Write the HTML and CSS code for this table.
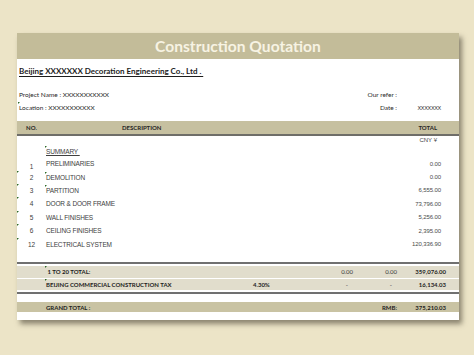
FILE: index.html
```html
<!DOCTYPE html>
<html>
<head>
<meta charset="utf-8">
<link rel="stylesheet" href="styles.css">
</head>
<body>
<div class="card">
  <div class="title">Construction Quotation</div>
  <div class="company"><span>Beijing XXXXXXX Decoration Engineering Co., Ltd .&nbsp;</span></div>
  <div class="info">
    <div class="info-row">
      <span class="info-left">Project Name : XXXXXXXXXXX</span>
      <span class="info-label">Our refer :</span>
      <span class="info-val"></span>
    </div>
    <div class="info-row">
      <span class="info-left mark mark-loc">Location : XXXXXXXXXXX</span>
      <span class="info-label">Date :</span>
      <span class="info-val">XXXXXXX</span>
    </div>
  </div>
  <div class="head">
    <span class="h-no">NO.</span>
    <span class="h-desc">DESCRIPTION</span>
    <span class="h-total">TOTAL</span>
  </div>
  <div class="items">
    <div class="cny">CNY ¥</div>
    <div class="item summary"><span class="no"></span><span class="desc mark"><u>SUMMARY&nbsp;</u></span><span class="amt"></span></div>
    <div class="item first"><span class="no">1</span><span class="desc">PRELIMINARIES</span><span class="amt">0.00</span></div>
    <div class="item"><span class="no mark mark-edge">2</span><span class="desc mark">DEMOLITION</span><span class="amt">0.00</span></div>
    <div class="item"><span class="no mark mark-edge">3</span><span class="desc mark">PARTITION</span><span class="amt">6,555.00</span></div>
    <div class="item"><span class="no mark mark-edge">4</span><span class="desc">DOOR &amp; DOOR FRAME</span><span class="amt">73,796.00</span></div>
    <div class="item"><span class="no mark mark-edge">5</span><span class="desc">WALL FINISHES</span><span class="amt">5,256.00</span></div>
    <div class="item"><span class="no mark mark-edge">6</span><span class="desc">CEILING FINISHES</span><span class="amt">2,395.00</span></div>
    <div class="item"><span class="no mark mark-edge">12</span><span class="desc">ELECTRICAL SYSTEM</span><span class="amt">120,336.90</span></div>
  </div>
  <div class="totals">
    <div class="trow">
      <span></span><span class="tl mark">&nbsp;1 TO 20 TOTAL:</span><span></span><span class="tn">0.00</span><span class="tn">0.00</span><span class="tt">359,076.00</span>
    </div>
    <div class="trow">
      <span></span><span class="tl mark">BEIJING COMMERCIAL CONSTRUCTION TAX</span><span class="tp">4.30%</span><span class="tn dash">-</span><span class="tn dash">-</span><span class="tt">16,134.03</span>
    </div>
  </div>
  <div class="grand">
    <span></span><span class="tl">GRAND TOTAL :</span><span></span><span></span><span class="tn">RMB:</span><span class="tt">375,210.03</span>
  </div>
</div>
</body>
</html>
```
FILE: styles.css
```css
html, body {
  margin: 0;
  padding: 0;
}
body {
  width: 474px;
  height: 355px;
  background: #ece4c7;
  overflow: hidden;
  font-family: "Liberation Sans", Arial, sans-serif;
  color: #3a3a3a;
}
.card {
  margin: 33px 0 0 17px;
  width: 442px;
  height: 287px;
  background: #fff;
  box-shadow: 3px 4px 5px rgba(60, 55, 40, 0.55);
  display: flex;
  flex-direction: column;
}
.title {
  height: 26px;
  background: #c3bc99;
  color: #f7f3e3;
  font-family: Lato, sans-serif;
  font-weight: bold;
  font-size: 15.6px;
  line-height: 26px;
  text-align: center;
}
.company {
  padding: 7px 0 0 2px;
  height: 14px;
  font-family: Lato, sans-serif;
  font-weight: bold;
  font-size: 8px;
  line-height: 10px;
  color: #1d1d1d;
}
.company span {
  text-decoration: underline;
  text-decoration-thickness: 1px;
  text-underline-offset: 2px;
}
.info {
  padding-top: 10px;
  display: flex;
  flex-direction: column;
  gap: 3px;
  font-family: Lato, sans-serif;
  font-size: 6.5px;
  color: #2a2a2a;
}
.info-row {
  display: grid;
  grid-template-columns: 1fr 37px 62px;
  height: 10px;
  line-height: 10px;
  padding-left: 2px;
}
.info-label {
  text-align: right;
}
.info-val {
  text-align: right;
  padding-right: 18px;
  font-family: "Liberation Sans", sans-serif;
  font-size: 5.5px;
  letter-spacing: -0.3px;
}
.head {
  margin-top: 8px;
  height: 13px;
  background: #c6c0a0;
  border-bottom: 2px solid #6e6d68;
  display: grid;
  grid-template-columns: 29px 1fr auto;
  align-items: center;
  font-family: Lato, sans-serif;
  font-weight: bold;
  font-size: 6px;
  color: #262626;
}
.h-no { text-align: center; }
.h-desc { padding-left: 76px; }
.h-total { padding-right: 22px; }
.items {
  display: flex;
  flex-direction: column;
  height: 126px;
}
.cny {
  align-self: flex-end;
  margin-right: 22px;
  font-size: 6px;
  line-height: 8px;
  color: #444;
}
.item {
  display: grid;
  grid-template-columns: 29px 1fr auto;
  align-items: center;
  height: 13.4px;
  padding-right: 18px;
  font-size: 6.5px;
  color: #404040;
  letter-spacing: -0.15px;
}
.item.summary {
  height: 11px;
  margin-top: 2px;
}
.item .no { text-align: center; font-size: 6.5px; }
.item.first .no { padding-top: 6px; }
.item .amt { font-size: 6px; text-align: right; color: #4a4a4a; letter-spacing: -0.1px; }
.mark { position: relative; }
.mark::before {
  content: "";
  position: absolute;
  left: -1px;
  top: -2px;
  border-top: 2px solid #2f6b2a;
  border-right: 2px solid transparent;
}
.mark-edge::before {
  left: 0;
  top: -3px;
}
.mark-loc::before {
  left: -1px;
  top: -1px;
}
.totals {
  border-top: 2px solid #707070;
  border-bottom: 2px solid #707070;
  padding: 2px 0 2px;
  display: flex;
  flex-direction: column;
  gap: 1px;
}
.trow, .grand {
  display: grid;
  grid-template-columns: 29px 207px 47px 53px 44px 49px;
  padding-right: 13px;
  align-items: center;
  font-family: Lato, sans-serif;
  font-weight: bold;
  font-size: 6px;
  color: #1e1e1e;
}
.trow {
  height: 11.5px;
  background: #e1ddcc;
}
.tn, .tt { text-align: right; }
.tn { color: #3a3a3a; font-weight: normal; }
.grand .tn { font-weight: bold; color: #1e1e1e; }
.dash { padding-right: 5px; }
.grand {
  margin-top: 8px;
  height: 10px;
  background: #c9c3a3;
}
```
